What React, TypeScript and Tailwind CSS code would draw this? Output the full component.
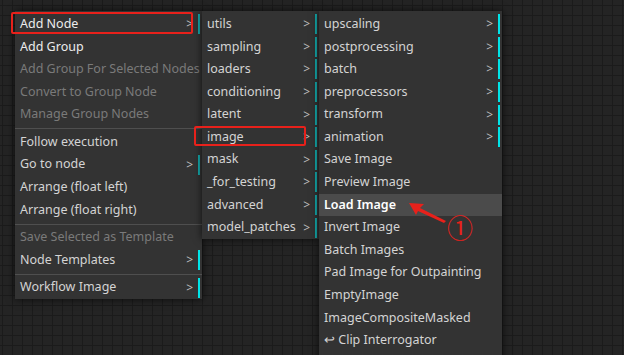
import React from "react";

type Item = {
  label?: string;
  sub?: boolean;
  disabled?: boolean;
  sep?: boolean;
  bright?: boolean;
  active?: boolean;
  strong?: boolean;
};

const mainItems: Item[] = [
  { label: "Add Node", sub: true, strong: true },
  { label: "Add Group", strong: true },
  { label: "Add Group For Selected Nodes", disabled: true },
  { label: "Convert to Group Node", disabled: true },
  { label: "Manage Group Nodes", disabled: true },
  { sep: true },
  { label: "Follow execution" },
  { label: "Go to node", sub: true },
  { label: "Arrange (float left)" },
  { label: "Arrange (float right)" },
  { sep: true },
  { label: "Save Selected as Template", disabled: true },
  { label: "Node Templates", sub: true, bright: true },
  { sep: true },
  { label: "Workflow Image", sub: true, bright: true },
];

const categoryItems: Item[] = [
  { label: "utils", sub: true },
  { label: "sampling", sub: true },
  { label: "loaders", sub: true },
  { label: "conditioning", sub: true },
  { label: "latent", sub: true },
  { label: "image", sub: true },
  { label: "mask", sub: true },
  { label: "_for_testing", sub: true },
  { label: "advanced", sub: true },
  { label: "model_patches", sub: true },
];

const imageItems: Item[] = [
  { label: "upscaling", sub: true, bright: true },
  { label: "postprocessing", sub: true, bright: true },
  { label: "batch", sub: true, bright: true },
  { label: "preprocessors", sub: true, bright: true },
  { label: "transform", sub: true, bright: true },
  { label: "animation", sub: true, bright: true },
  { label: "Save Image" },
  { label: "Preview Image" },
  { label: "Load Image", active: true },
  { label: "Invert Image" },
  { label: "Batch Images" },
  { label: "Pad Image for Outpainting" },
  { label: "EmptyImage" },
  { label: "ImageCompositeMasked" },
  { label: "↩ Clip Interrogator" },
];

function MenuRow({ item }: { item: Item }) {
  if (item.sep) {
    return <div className="mt-[2.5px] mb-[1.5px] h-px bg-[#4f4f4f]"></div>;
  }
  const color = item.disabled
    ? "text-[#7a7a7a]"
    : item.active
    ? "text-white font-semibold"
    : item.strong
    ? "text-[#ececec]"
    : "text-[#d4d4d4]";
  return (
    <div
      className={`flex h-[22.6px] items-center pl-[5px] pr-[2px] whitespace-nowrap ${
        item.active ? "bg-[#4b4b4b]" : ""
      }`}
    >
      <span className={`flex-1 ${color}`}>{item.label}</span>
      {item.sub && (
        <>
          <span className="mr-[5px] text-[12px] text-[#bdbdbd]">&gt;</span>
          <span
            className={`h-[20px] w-[2px] ${
              item.bright ? "bg-[#00e4e8]" : "bg-[#14a9ab]"
            }`}
          ></span>
        </>
      )}
    </div>
  );
}

function Menu({ items, className }: { items: Item[]; className: string }) {
  return (
    <div
      className={`flex shrink-0 flex-col bg-[#333333] pt-[2px] shadow-[0_0_8px_rgba(0,0,0,0.7)] ${className}`}
    >
      {items.map((item, i) => (
        <MenuRow key={i} item={item} />
      ))}
    </div>
  );
}

export default function App() {
  return (
    <div
      className="relative h-[355px] w-[624px] overflow-hidden bg-[#242424] bg-[linear-gradient(to_right,#1b1b1b_1px,transparent_1px),linear-gradient(to_bottom,#1b1b1b_1px,transparent_1px)] bg-[size:10px_10px] bg-[position:2px_5px] text-[12.5px]"
      style={{ fontFamily: '"Noto Sans", "Open Sans", sans-serif' }}
    >
      {/* context menu + submenus */}
      <div className="flex items-start pl-[15px] pt-[11px]">
        <Menu items={mainItems} className="w-[187px]" />
        <Menu items={categoryItems} className="w-[117px]" />
        <Menu items={imageItems} className="w-[183px] pb-4" />
      </div>

      {/* annotations */}
      <div className="absolute left-[11px] top-[12px] h-[22px] w-[182px] rounded-[2px] border-2 border-[#e8211b]"></div>
      <div className="absolute left-[194px] top-[126px] h-[20px] w-[112px] rounded-[2px] border-2 border-[#e8211b]"></div>
      <svg className="absolute left-0 top-0" width="624" height="355">
        <polygon points="409,203 424,204 420,208 446,221 444,223 418,211 416,215" fill="#e8211b" />
      </svg>
      <div
        className="absolute left-[447px] top-[214px] text-[26px] leading-none text-[#e8211b]"
        style={{ fontFamily: '"Noto Sans CJK SC", sans-serif' }}
      >
        ①
      </div>
    </div>
  );
}
